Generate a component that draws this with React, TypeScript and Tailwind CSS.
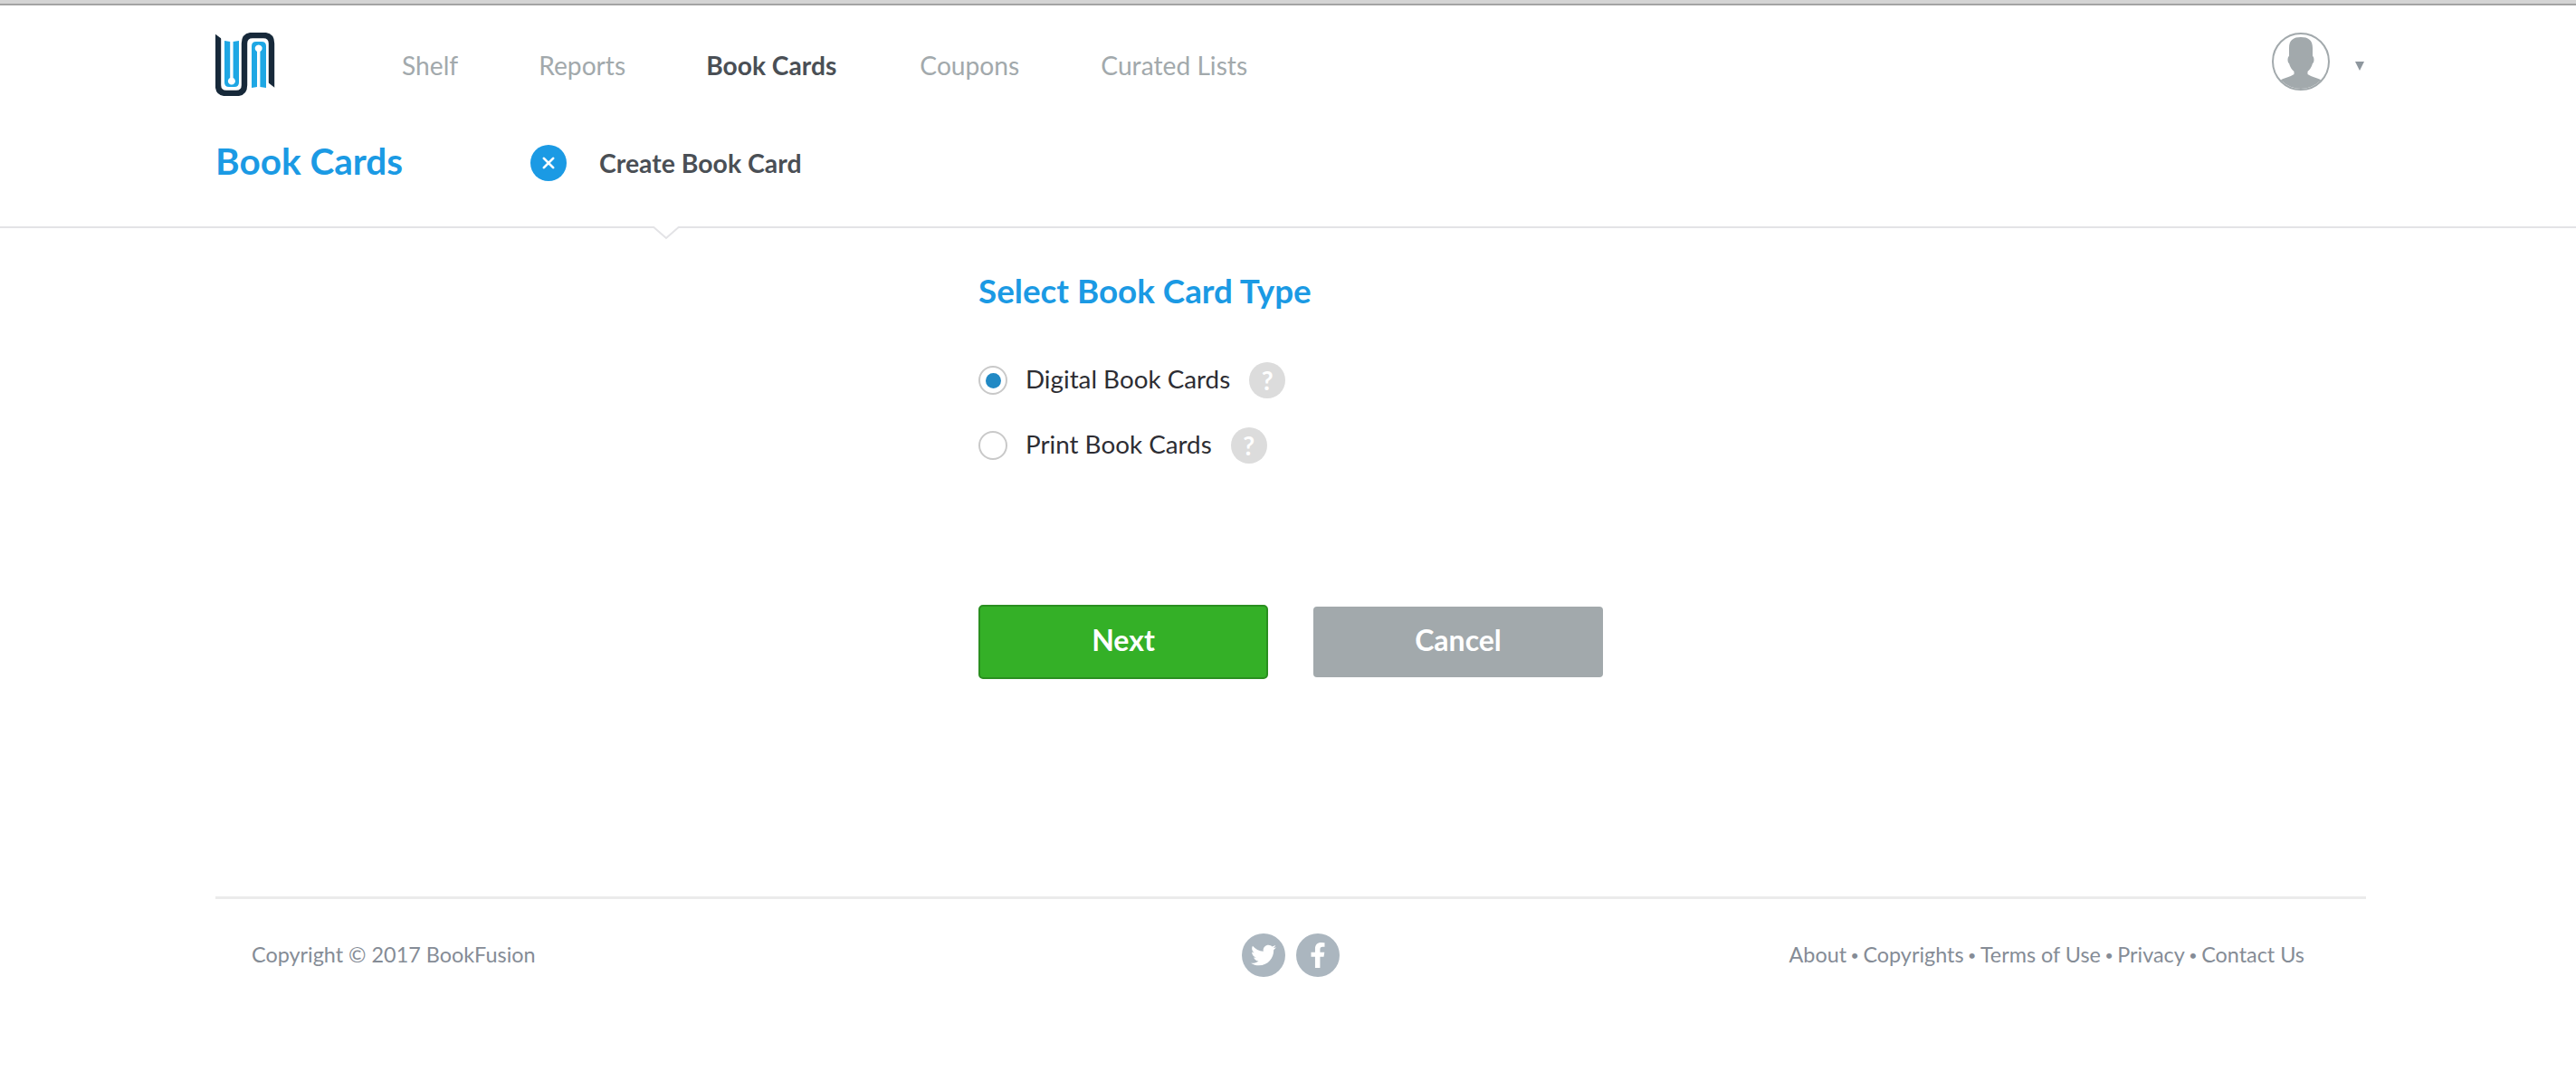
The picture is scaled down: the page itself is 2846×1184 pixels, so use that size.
import { FaTwitter, FaFacebookF } from "react-icons/fa";

function Logo() {
  return (
    <svg className="mb-[2px]" width="66" height="70" viewBox="0 0 66 70" fill="none">
      <path d="M3 1 L3 58 Q3 67 12 67 L23 67 Q32 67 32 58 L32 12 Q32 3 41 3 L53 3 Q62 3 62 12 L62 70" stroke="#17293a" strokeWidth="6.4" />
      <path d="M-1 1 L-1 -2 L8 -2 L7 7 Z" fill="#ffffff" />
      <path d="M67 71 L67 62 L58 55 L58 71 Z" fill="#ffffff" />
      <path d="M10 9 L16.2 10 L16.2 50 A4 4 0 1 0 19.6 50 L19.6 10 L26 9 L26 55 Q26 60 21 60 L15 60 Q10 60 10 55 Z" fill="#1ea7e4" />
      <path d="M40 61 L46 60 L46 21 A4 4 0 1 1 49.4 21 L49.4 60 L56 61 L56 15 Q56 10 51 10 L45 10 Q40 10 40 15 Z" fill="#1ea7e4" />
    </svg>
  );
}

function Avatar() {
  return (
    <svg width="64" height="64" viewBox="0 0 64 64">
      <defs>
        <clipPath id="avatar-clip">
          <circle cx="32" cy="32" r="30" />
        </clipPath>
      </defs>
      <circle cx="32" cy="32" r="31" fill="#ffffff" stroke="#a2a9ac" strokeWidth="2" />
      <path
        clipPath="url(#avatar-clip)"
        d="M19 17 C19 8 24 5 32 5 C40 5 45 8 45 17 L45 26 C47 27 47 33 45 34 C44 38 42 41 39.5 43 L39.5 46 C44 49 50 50 56 53 L56 66 L8 66 L8 53 C14 50 20 49 24.5 46 L24.5 43 C22 41 20 38 19 34 C17 33 17 27 19 26 Z"
        fill="#a2a9ac"
      />
    </svg>
  );
}

function Help() {
  return (
    <span className="flex h-[40px] w-[40px] items-center justify-center rounded-full bg-[#dcdcdc] text-[28px] font-bold leading-none text-white">
      ?
    </span>
  );
}

function Radio({ label, checked }: { label: string; checked?: boolean }) {
  return (
    <div className="flex h-[40px] items-center">
      <span className="flex h-[32px] w-[32px] items-center justify-center rounded-full border-2 border-[#c9c9c9]">
        {checked && <span className="h-[17px] w-[17px] rounded-full bg-[#2189c4]" />}
      </span>
      <span className="ml-[20px] mr-[21px] pb-[2px] text-[27.8px] leading-[38px] text-[#2d2d33]">{label}</span>
      <Help />
    </div>
  );
}

const links = ["About", "Copyrights", "Terms of Use", "Privacy", "Contact Us"];

export default function App() {
  return (
    <div className="h-[1184px] overflow-hidden bg-white font-['Lato','Liberation_Sans',sans-serif]">
      <div className="h-[6px] border-b-2 border-[#a3a3a3] bg-[#d4d4d4]" />
      <header className="relative border-b-2 border-[#e3e3e6]">
        <div className="ml-[238px] mr-[232px]">
          <div className="flex h-[132px] items-center">
            <Logo />
            <nav className="ml-[140px] flex gap-[89px] text-[28.2px] text-[#a2a9ac]">
              <span>Shelf</span>
              <span>Reports</span>
              <span className="mr-[3px] font-bold text-[#4a4f55]">Book Cards</span>
              <span className="mr-[1px]">Coupons</span>
              <span>Curated Lists</span>
            </nav>
            <div className="mb-[9px] ml-auto mr-[2px] flex items-center">
              <Avatar />
              <span className="ml-[28px] mt-[11px] h-0 w-0 border-x-[5px] border-t-[10px] border-x-transparent border-t-[#8e979e]" />
            </div>
          </div>
          <div className="flex h-[84px] items-center">
            <h1 className="w-[348px] pb-[4px] text-[40.5px] font-bold text-[#1b9ae4]">Book Cards</h1>
            <span className="flex h-[40px] w-[40px] items-center justify-center rounded-full bg-[#1b9ae4]">
              <svg width="16" height="16" viewBox="0 0 14 14" stroke="#ffffff" strokeWidth="2.4" strokeLinecap="round">
                <path d="M2.5 2.5 L11.5 11.5 M11.5 2.5 L2.5 11.5" />
              </svg>
            </span>
            <span className="ml-[36px] text-[28.4px] font-bold text-[#4a4f55]">Create Book Card</span>
          </div>
          <div className="h-[28px]" />
        </div>
        <svg className="absolute left-[720px] top-full" width="32" height="15" viewBox="0 0 32 15">
          <path d="M0 -1 L16 13 L32 -1" fill="#ffffff" stroke="#e3e3e6" strokeWidth="2" />
        </svg>
      </header>

      <main className="ml-[1081px] w-[700px] pt-[49px]">
        <h2 className="text-[36.8px] font-bold leading-[40px] text-[#1b9ae4]">Select Book Card Type</h2>
        <div className="mt-[59px] flex flex-col gap-[32px]">
          <Radio label="Digital Book Cards" checked />
          <Radio label="Print Book Cards" />
        </div>
        <div className="mt-[156px] flex items-center gap-[50px]">
          <button className="h-[82px] w-[320px] rounded-[5px] border-2 border-[#2a8f20] bg-[#34b027] pb-[4px] text-[32px] font-bold text-white">
            Next
          </button>
          <button className="h-[78px] w-[320px] rounded-[4px] bg-[#a2a9ac] pb-[4px] text-[32px] font-bold text-white">
            Cancel
          </button>
        </div>
      </main>

      <footer className="ml-[238px] mr-[232px] mt-[240px] border-t-[3px] border-[#ebebeb]">
        <div className="grid h-[128px] grid-cols-3 items-center pb-[4px] text-[23.4px] text-[#858c96]">
          <span className="pl-[40px]">Copyright © 2017 BookFusion</span>
          <div className="flex justify-center gap-[12px]">
            <span className="flex h-[48px] w-[48px] items-center justify-center rounded-full bg-[#abb6bf] text-[28px] text-white">
              <FaTwitter />
            </span>
            <span className="flex h-[48px] w-[48px] items-center justify-center rounded-full bg-[#abb6bf] text-[28px] text-white">
              <FaFacebookF />
            </span>
          </div>
          <div className="flex items-center justify-end gap-[4.5px] pr-[68px]">
            {links.map((l, i) => (
              <span key={l} className="flex items-center gap-[4.5px]">
                {i > 0 && <span className="text-[16px] leading-none">•</span>}
                {l}
              </span>
            ))}
          </div>
        </div>
      </footer>
    </div>
  );
}
